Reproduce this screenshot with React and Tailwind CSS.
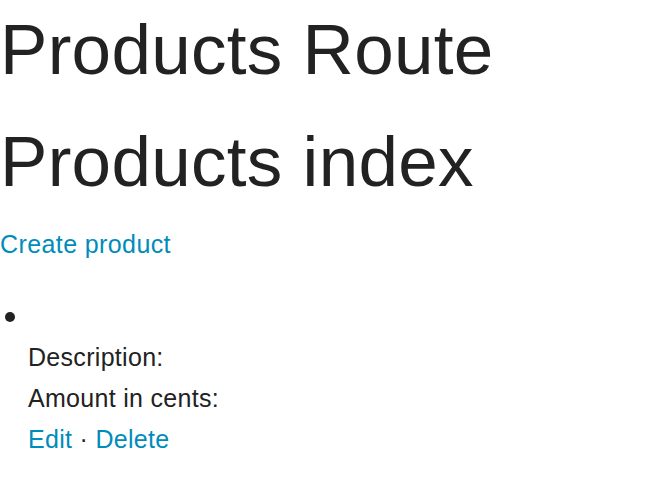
const App = () => {
  return (
    <div className="min-h-[490px] bg-white text-[#222222] font-['Liberation_Sans',Arial,sans-serif]">
      <h1 className="text-[71px] leading-[100px] mb-[12px] font-normal tracking-[0.3px]">Products Route</h1>
      <h1 className="text-[71px] leading-[100px] mb-[12px] font-normal tracking-[0.3px]">Products index</h1>

      <p className="text-[25px] leading-[40px] tracking-[0.4px]">
        <a href="#" className="text-[#008cba]">Create product</a>
      </p>

      <ul className="list-none pl-[28px] mt-[32px] text-[25px] leading-[41px] tracking-[0.3px]">
        <li>
          <p className="-ml-[23px]">
            <span className="inline-block w-[10px] h-[10px] rounded-full bg-[#222222] align-[3px]"></span>
          </p>
          <p>Description:</p>
          <p>Amount in cents:</p>
          <p>
            <a href="#" className="text-[#008cba]">Edit</a>
            {' · '}
            <a href="#" className="text-[#008cba]">Delete</a>
          </p>
        </li>
      </ul>
    </div>
  );
};

export default App;
